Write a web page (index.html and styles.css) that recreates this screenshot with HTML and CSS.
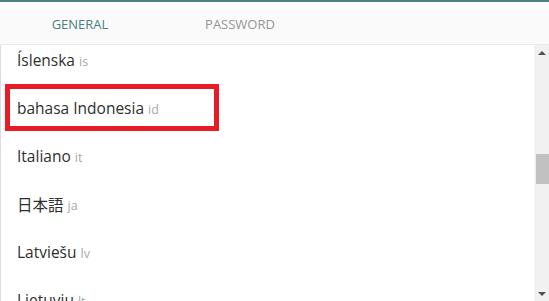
FILE: index.html
```html
<!DOCTYPE html>
<html lang="en">
<head>
<meta charset="UTF-8">
<title>Settings - Language</title>

<link rel="stylesheet" href="styles.css">
</head>

<body>
    <div class="panel">
        <div class="tabs">
            <div class="tab active">General</div>
            <div class="tab">Password</div>
        </div>

        <div class="content">
            <div class="list-wrap">
                <ul class="languages">
                    <li><span class="name">Íslenska</span><span class="code">is</span></li>
                    <li><span class="name">bahasa Indonesia</span><span class="code">id</span></li>
                    <li><span class="name">Italiano</span><span class="code">it</span></li>
                    <li><span class="name">日本語</span><span class="code">ja</span></li>
                    <li><span class="name">Latviešu</span><span class="code">lv</span></li>
                    <li><span class="name">Lietuvių</span><span class="code">lt</span></li>
                </ul>
                <div class="highlight"></div>
            </div>

            <div class="scrollbar">
                <div class="arrow up"></div>
                <div class="track">
                    <div class="thumb"></div>
                </div>
                <div class="arrow down"></div>
            </div>
        </div>
    </div>
</body>
</html>
```

FILE: styles.css
```css
body {
    margin: 0;
    background: white;
    font-family: "Open Sans", "Noto Sans", sans-serif;
}

.panel {
    height: 301px;
    display: flex;
    flex-direction: column;
    overflow: hidden;
}

.tabs {
    display: flex;
    height: 42px;
    background: #fafafa;
    border-top: 2px solid #4b807b;
    border-bottom: 1px solid #ececec;
}

.tab {
    width: 160px;
    display: flex;
    align-items: center;
    justify-content: center;
    font-size: 13px;
    text-transform: uppercase;
    color: #959595;
    padding-top: 2px;
}

.tab.active {
    color: #4a817c;
}

.content {
    flex: 1;
    display: flex;
    min-height: 0;
}

.list-wrap {
    flex: 1;
    position: relative;
    overflow: hidden;
    border-left: 1px solid #dedede;
}

.languages {
    list-style: none;
    margin: -9px 0 0 0;
    padding: 0;
}

.languages li {
    height: 48px;
    display: flex;
    align-items: center;
    padding-left: 16px;
}

.name {
    font-size: 15.5px;
    color: #2f2f2f;
    font-family: "Open Sans", "Noto Sans CJK JP", sans-serif;
}

.code {
    font-size: 12.5px;
    color: #a8a8a8;
    margin-left: 4px;
    padding-top: 2px;
}

/* annotation box drawn over the selected row */
.highlight {
    position: absolute;
    left: 4px;
    top: 39px;
    width: 204px;
    height: 37px;
    border: 5px solid #e81c24;
}

.scrollbar {
    width: 15px;
    background: #f1f1f1;
    display: flex;
    flex-direction: column;
}

.arrow {
    height: 15px;
    display: flex;
    align-items: center;
    justify-content: center;
}

.arrow::before {
    content: "";
    border-left: 4px solid transparent;
    border-right: 4px solid transparent;
}

.arrow.up::before {
    border-bottom: 4px solid #505050;
}

.arrow.down::before {
    border-top: 4px solid #505050;
}

.track {
    flex: 1;
    padding-top: 94px;
}

.thumb {
    height: 30px;
    margin-left: 2px;
    background: #c1c1c1;
}
```
